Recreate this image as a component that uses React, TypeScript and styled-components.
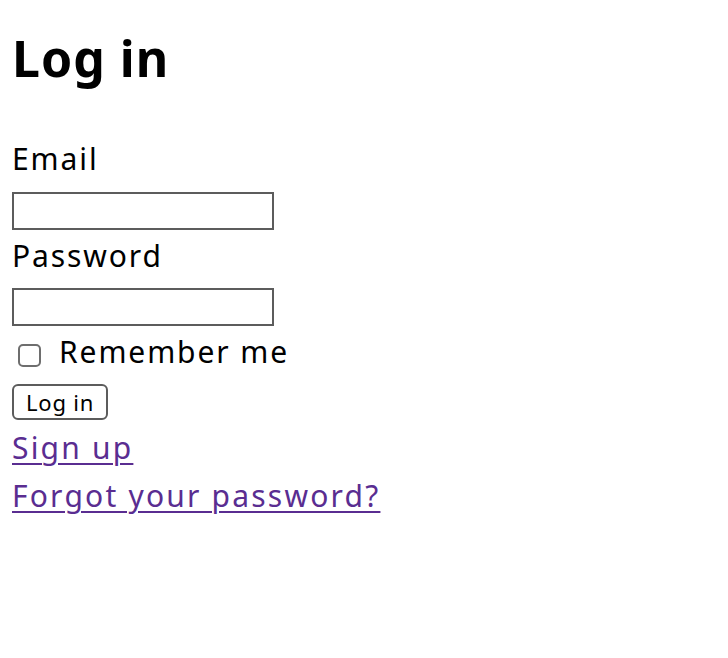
import React from "react";
import styled, { createGlobalStyle } from "styled-components";

const GlobalStyle = createGlobalStyle`
  html, body {
    margin: 0;
    padding: 0;
    background: #fff;
  }
  body {
    font-family: "Noto Sans", "Noto Sans CJK JP", sans-serif;
    color: #000;
  }
`;

const Page = styled.div`
  padding: 28px 12px 0;
`;

const Title = styled.h1`
  margin: 0 0 47px;
  font-size: 50px;
  line-height: 60px;
  font-weight: 700;
  letter-spacing: 1px;
`;

const Form = styled.form`
  font-size: 30px;
  letter-spacing: 1.9px;
`;

const Field = styled.div`
  display: flex;
  flex-direction: column;
  align-items: flex-start;
`;

const Label = styled.label`
  display: block;
  line-height: 48px;
`;

const TextInput = styled.input`
  box-sizing: border-box;
  width: 262px;
  height: 38px;
  margin: ${(p: { $top?: number }) => p.$top ?? 9}px 0 2px;
  border: 2px solid #5c5c5c;
  border-radius: 0;
  background: #fff;
  font-size: 20px;
  padding: 2px 4px;
`;

const CheckRow = styled.div`
  display: flex;
  align-items: center;
  height: 48px;
  gap: 18px;
  padding-left: 6px;
`;

const Check = styled.input`
  appearance: none;
  box-sizing: border-box;
  width: 23px;
  height: 23px;
  margin: 6px 0 0;
  border: 2px solid #6e6e6e;
  border-radius: 5px;
  background: #fff;
`;

const Actions = styled.div`
  padding-top: 3px;
`;

const Submit = styled.button`
  box-sizing: border-box;
  height: 36px;
  padding: 0 12px;
  border: 2px solid #5c5c5c;
  border-radius: 6px;
  background: #fff;
  color: #000;
  font-family: "Noto Sans", sans-serif;
  font-size: 22px;
  letter-spacing: 0.8px;
  line-height: 1;
`;

const Links = styled.div`
  padding-top: 4px;
  font-size: 30px;
  line-height: 48px;
  letter-spacing: 2.2px;
`;

const LinkItem = styled.a`
  color: #5a2d91;
  text-decoration: underline;
  text-underline-offset: 4px;
  text-decoration-thickness: 2px;
`;

export default function App() {
  return (
    <Page>
      <GlobalStyle />
      <Title>Log in</Title>
      <Form onSubmit={(e) => e.preventDefault()}>
        <Field>
          <Label htmlFor="email">Email</Label>
          <TextInput id="email" type="email" />
        </Field>
        <Field>
          <Label htmlFor="password">Password</Label>
          <TextInput id="password" type="password" $top={8} />
        </Field>
        <CheckRow>
          <Check id="remember" type="checkbox" />
          <Label htmlFor="remember">Remember me</Label>
        </CheckRow>
        <Actions>
          <Submit type="submit">Log in</Submit>
        </Actions>
      </Form>
      <Links>
        <LinkItem href="#">Sign up</LinkItem>
        <br />
        <LinkItem href="#">Forgot your password?</LinkItem>
      </Links>
    </Page>
  );
}
